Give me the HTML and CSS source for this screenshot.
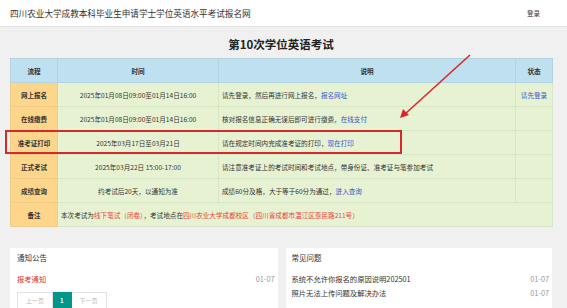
FILE: index.html
```html
<!DOCTYPE html>
<html lang="zh-CN">
<head>
  <meta charset="UTF-8">
  <title>四川农业大学成教本科毕业生申请学士学位英语水平考试报名网</title>
  <link rel="stylesheet" href="styles.css">
</head>
<body>
  <div class="topbar">
    <div class="site-title">四川农业大学成教本科毕业生申请学士学位英语水平考试报名网</div>
    <a class="login" href="#">登录</a>
  </div>

  <div class="main">
    <h2 class="exam-title">第10次学位英语考试</h2>

    <table class="flow">
      <colgroup>
        <col class="c-step">
        <col class="c-time">
        <col class="c-desc">
        <col class="c-state">
      </colgroup>
      <thead>
        <tr>
          <th>流程</th>
          <th>时间</th>
          <th>说明</th>
          <th>状态</th>
        </tr>
      </thead>
      <tbody>
        <tr>
          <td class="step">网上报名</td>
          <td class="time">2025年01月08日09:00至01月14日16:00</td>
          <td class="desc">请先登录，然后再进行网上报名，<a href="#">报名网址</a></td>
          <td class="state"><a href="#">请先登录</a></td>
        </tr>
        <tr>
          <td class="step">在线缴费</td>
          <td class="time">2025年01月08日09:00至01月14日16:00</td>
          <td class="desc">核对报名信息正确无误后即可进行缴费，<a href="#">在线支付</a></td>
          <td class="state"></td>
        </tr>
        <tr>
          <td class="step">准考证打印</td>
          <td class="time">2025年03月17日至03月21日</td>
          <td class="desc">请在规定时间内完成准考证的打印，<a href="#">现在打印</a></td>
          <td class="state"></td>
        </tr>
        <tr>
          <td class="step">正式考试</td>
          <td class="time">2025年03月22日 15:00-17:00</td>
          <td class="desc">请注意准考证上的考试时间和考试地点，带身份证、准考证与笔参加考试</td>
          <td class="state"></td>
        </tr>
        <tr>
          <td class="step">成绩查询</td>
          <td class="time">约考试后20天，以通知为准</td>
          <td class="desc">成绩60分及格，大于等于60分为通过，<a href="#">进入查询</a></td>
          <td class="state"></td>
        </tr>
        <tr>
          <td class="step">备注</td>
          <td class="note" colspan="3">本次考试为<span class="hl">线下笔试（闭卷）</span>，考试地点在<span class="hl">四川农业大学成都校区（四川省成都市温江区惠民路211号）</span></td>
        </tr>
      </tbody>
    </table>

    <div class="panels">
      <div class="panel">
        <div class="panel-title">通知公告</div>
        <ul class="list">
          <li><a class="red" href="#">报考通知</a><span class="date">01-07</span></li>
        </ul>
        <div class="pager">
          <span class="page">上一页</span>
          <span class="page current">1</span>
          <span class="page">下一页</span>
        </div>
      </div>
      <div class="panel">
        <div class="panel-title">常见问题</div>
        <ul class="list">
          <li><a href="#">系统不允许你报名的原因说明202501</a><span class="date">01-07</span></li>
          <li><a href="#">照片无法上传问题及解决办法</a><span class="date">01-07</span></li>
        </ul>
      </div>
    </div>
  </div>

  <!-- highlight drawn over the screenshot -->
  <div class="mark-box"></div>
  <svg class="mark-arrow" width="567" height="308" viewBox="0 0 567 308">
    <line x1="470" y1="55" x2="405" y2="114" stroke="#d9262c" stroke-width="1.6"/>
    <polygon points="400,118 403,109 409,115" fill="#d9262c"/>
  </svg>
</body>
</html>
```

FILE: styles.css
```css
body {
  margin: 0;
  background: #f0f0f0;
  color: #333;
  font-family: "Noto Sans CJK SC", "Noto Sans", sans-serif;
  overflow: hidden;
}

a {
  text-decoration: none;
}

.topbar {
  height: 26px;
  background: #fff;
  border-bottom: 1px solid #e2e2e2;
  display: flex;
  align-items: center;
  justify-content: space-between;
  padding: 0 27px 0 10px;
}

.site-title {
  font-size: 8.6px;
  color: #333;
}

.login {
  font-size: 6.5px;
  color: #333;
}

.main {
  padding: 0 15px 0 10px;
}

.exam-title {
  margin: 0;
  padding-top: 3px;
  height: 28px;
  line-height: 28px;
  font-size: 11.5px;
  font-weight: bold;
  text-align: center;
  color: #222;
}

.flow {
  width: 542px;
  border-collapse: collapse;
  table-layout: fixed;
  font-size: 6.6px;
}

.c-step { width: 47px; }
.c-time { width: 161px; }
.c-desc { width: 297px; }
.c-state { width: 37px; }

.flow th,
.flow td {
  height: 23px;
  padding: 0 3px;
  border: 1px solid #d8e6c8;
  white-space: nowrap;
  overflow: hidden;
}

.flow th {
  background: #bfe0ee;
  border-color: #b2d3e1;
  font-weight: bold;
  text-align: center;
}

.flow td {
  background: #e6f2d1;
}

.flow td.step {
  background: #fdd68c;
  border-color: #f0cc88;
  font-weight: bold;
  text-align: center;
  font-size: 6.5px;
}

.time,
.state {
  text-align: center;
}

.desc a,
.state a {
  color: #3e55d0;
}

.note .hl {
  color: #e8453c;
}

.panels {
  display: flex;
  gap: 8px;
  margin-top: 21px;
}

.panel {
  flex: 1;
  background: #fff;
  padding: 0 3px 12px 7px;
}

.panel + .panel {
  padding-left: 6px;
}

.panel-title {
  height: 20px;
  line-height: 20px;
  font-size: 7.5px;
  color: #333;
}

.list {
  list-style: none;
  margin: 4px 0 0;
  padding: 0;
}

.list li {
  display: flex;
  justify-content: space-between;
  height: 14px;
  line-height: 14px;
  font-size: 7.3px;
}

.list a {
  color: #333;
}

.list a.red {
  color: #d9342b;
}

.date {
  color: #999;
}

.pager {
  display: flex;
  margin-top: 6px;
}

.page {
  height: 16px;
  line-height: 16px;
  padding: 0 8px;
  border: 1px solid #e2e2e2;
  font-size: 6px;
  color: #bbb;
  background: #fff;
}

.page + .page {
  border-left: none;
}

.page.current {
  background: #009688;
  border-color: #009688;
  color: #fff;
  font-weight: bold;
  padding: 0 7px;
}

.mark-box {
  position: absolute;
  left: 5px;
  top: 130px;
  width: 393px;
  height: 20px;
  border: 2px solid #d42a2a;
}

.mark-arrow {
  position: absolute;
  left: 0;
  top: 0;
  pointer-events: none;
}
```
